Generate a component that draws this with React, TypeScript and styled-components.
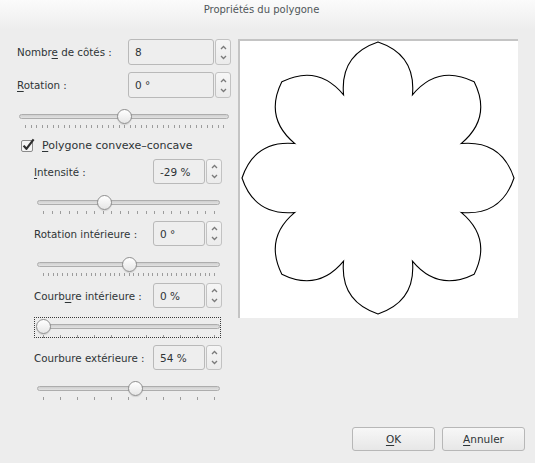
import React from "react";
import styled, { createGlobalStyle } from "styled-components";

const GlobalStyle = createGlobalStyle`
  html, body { margin: 0; padding: 0; background: #ededed; }
  body { font-family: "DejaVu Sans", "Liberation Sans", sans-serif; }
  * { box-sizing: border-box; }
`;

const Window = styled.div`
  width: 535px;
  height: 463px;
  background: #ededed;
  display: flex;
  flex-direction: column;
  color: #2e3436;
  overflow: hidden;
`;

const TitleBar = styled.div`
  height: 30px;
  flex: none;
  background: linear-gradient(#fbfbfb, #ededed);
  display: flex;
  justify-content: center;
  padding: 4px 12px 0 0;
  font-size: 10px;
  line-height: 12px;
  color: #505659;
`;

const Body = styled.div`
  display: flex;
  align-items: flex-start;
  gap: 7px;
  padding: 9px 17px 0 17px;
  flex: none;
`;

const LeftCol = styled.div`
  width: 214px;
  display: flex;
  flex-direction: column;
`;

const Row = styled.div<{ $h: number; $mt?: number }>`
  height: ${(p) => p.$h}px;
  margin-top: ${(p) => p.$mt ?? 0}px;
  display: flex;
  align-items: center;
  justify-content: space-between;
`;

const Label = styled.span`
  font-size: 10.3px;
  color: #2e3436;
  white-space: nowrap;
  u { text-decoration: underline; text-underline-offset: 2px; }
`;

const Spin = styled.div<{ $w: number }>`
  display: flex;
  height: 100%;
  gap: 1px;
  width: ${(p) => p.$w}px;
`;

const SpinField = styled.div`
  flex: 1;
  border: 1px solid #b9b9b9;
  border-radius: 3px;
  background: #eeeeee;
  display: flex;
  align-items: center;
  padding-left: 6px;
  font-size: 10.5px;
  color: #2e3436;
`;

const SpinButtons = styled.div`
  width: 16px;
  border: 1px solid #c2c2c2;
  border-radius: 3px;
  background: linear-gradient(#f6f6f6, #ebebeb);
  display: flex;
  flex-direction: column;
  align-items: center;
  justify-content: space-around;
  padding: 2px 0;
`;

const SliderWrap = styled.div<{ $mt: number; $pl: number; $pr: number; $focused?: boolean }>`
  margin-top: ${(p) => p.$mt}px;
  padding: 0 ${(p) => p.$pr}px 0 ${(p) => p.$pl}px;
  position: relative;
  ${(p) =>
    p.$focused
      ? `&::after { content: ""; position: absolute; left: 0; right: 1px; top: -1px; height: 19px; border: 1px dotted #3a3a3a; pointer-events: none; }`
      : ""}
`;

const SliderBox = styled.div`
  position: relative;
  height: 24px;
  display: flex;
  flex-direction: column;
`;

const Track = styled.div`
  margin-top: 6px;
  height: 5px;
  border: 1px solid #adadad;
  border-radius: 3px;
  background: linear-gradient(#cfcfcf, #e2e2e2);
`;

const Ticks = styled.div`
  margin-top: 6px;
  height: 3px;
  padding: 0 5px 0 6px;
  display: flex;
  justify-content: space-between;
`;

const Tick = styled.span`
  width: 1px;
  height: 3px;
  background: #9c9c9c;
`;

const Handle = styled.div`
  position: absolute;
  top: 1px;
  width: 15px;
  height: 15px;
  border-radius: 50%;
  border: 1px solid #8e8e8e;
  background: linear-gradient(#ffffff, #e6e6e6);
  box-shadow: 0 1px 1px rgba(0, 0, 0, 0.12);
`;

const CheckRow = styled.div`
  margin-top: 5px;
  height: 16px;
  display: flex;
  align-items: center;
  gap: 6px;
  padding-left: 4px;
  font-size: 11px;
  color: #2e3436;
  u { text-decoration: underline; text-underline-offset: 2px; }
`;

const Indented = styled.div`
  margin-top: 6px;
  padding-left: 17px;
  margin-right: 9px;
  display: flex;
  flex-direction: column;
  gap: 3px;
`;

const Field = styled.div`
  display: flex;
  flex-direction: column;
`;

const Preview = styled.div`
  width: 280px;
  height: 279px;
  flex: none;
  background: #ffffff;
  border-top: 2px solid #c4c4c4;
  border-left: 2px solid #c4c4c4;
  display: flex;
`;

const Footer = styled.div`
  margin-top: auto;
  display: flex;
  justify-content: flex-end;
  gap: 7px;
  padding: 0 10px 12px 0;
`;

const Button = styled.button`
  width: 83px;
  height: 24px;
  border: 1px solid #b7b7b7;
  border-radius: 3px;
  background: linear-gradient(#f7f7f7, #e7e7e7);
  font-family: "DejaVu Sans", "Liberation Sans", sans-serif;
  font-size: 10.5px;
  color: #2e3436;
  padding: 0;
  u { text-decoration: underline; text-underline-offset: 2px; }
`;

const Chevron = ({ up }: { up?: boolean }) => (
  <svg width="7" height="5" viewBox="0 0 7 5">
    <path
      d={up ? "M1 4 L3.5 1.5 L6 4" : "M1 1 L3.5 3.5 L6 1"}
      fill="none"
      stroke="#7a7a7a"
      strokeWidth="1.3"
    />
  </svg>
);

const SpinBox = ({ value, w }: { value: string; w: number }) => (
  <Spin $w={w}>
    <SpinField>{value}</SpinField>
    <SpinButtons>
      <Chevron up />
      <Chevron />
    </SpinButtons>
  </Spin>
);

const Slider = ({
  frac,
  ticks,
  mt,
  pl,
  pr,
  focused,
}: {
  frac: number;
  ticks: number;
  mt: number;
  pl: number;
  pr: number;
  focused?: boolean;
}) => (
  <SliderWrap $mt={mt} $pl={pl} $pr={pr} $focused={focused}>
    <SliderBox>
      <Track />
      <Ticks>
        {Array.from({ length: ticks }).map((_, i) => (
          <Tick key={i} />
        ))}
      </Ticks>
      <Handle style={{ left: `calc(6px + (100% - 11px) * ${frac} - 7.5px)` }} />
    </SliderBox>
  </SliderWrap>
);

const CheckIcon = () => (
  <svg width="15" height="14" viewBox="0 0 15 14">
    <rect x="0.5" y="2.5" width="11" height="11" rx="1.5" fill="#f4f4f4" stroke="#8a8a8a" />
    <path d="M2.6 7.6 L5.4 10.8 L12.6 1.4" fill="none" stroke="#2e2e2e" strokeWidth="2.2" strokeLinejoin="round" />
  </svg>
);

function flowerPath(): string {
  const cx = 138;
  const cy = 137;
  const R = 136;
  const r = 90;
  const bulge = 25;
  const pt = (a: number, rad: number) => {
    const t = (a * Math.PI) / 180;
    return [cx + rad * Math.sin(t), cy - rad * Math.cos(t)];
  };
  const ctrl = (p: number[], q: number[]) => {
    const mx = (p[0] + q[0]) / 2;
    const my = (p[1] + q[1]) / 2;
    const dx = q[0] - p[0];
    const dy = q[1] - p[1];
    const len = Math.hypot(dx, dy);
    let nx = -dy / len;
    let ny = dx / len;
    if (nx * (mx - cx) + ny * (my - cy) < 0) {
      nx = -nx;
      ny = -ny;
    }
    return [mx + nx * bulge, my + ny * bulge];
  };
  const f = (n: number) => n.toFixed(2);
  let prev = pt(-22.5, r);
  let d = `M${f(prev[0])} ${f(prev[1])}`;
  for (let k = 0; k < 8; k++) {
    const o = pt(k * 45, R);
    const i = pt(k * 45 + 22.5, r);
    const c1 = ctrl(prev, o);
    const c2 = ctrl(o, i);
    d += ` Q${f(c1[0])} ${f(c1[1])} ${f(o[0])} ${f(o[1])}`;
    d += ` Q${f(c2[0])} ${f(c2[1])} ${f(i[0])} ${f(i[1])}`;
    prev = i;
  }
  return d + " Z";
}

const Flower = () => (
  <svg width="278" height="277" viewBox="0 0 278 277">
    <path d={flowerPath()} fill="none" stroke="#000" strokeWidth="1.1" />
  </svg>
);

export default function App() {
  return (
    <>
      <GlobalStyle />
      <Window>
        <TitleBar>Propriétés du polygone</TitleBar>
        <Body>
          <LeftCol>
            <Row $h={26}>
              <Label>
                Nombr<u>e</u> de côtés :
              </Label>
              <SpinBox value="8" w={103} />
            </Row>
            <Row $h={26} $mt={7}>
              <Label>
                <u>R</u>otation :
              </Label>
              <SpinBox value="0 °" w={103} />
            </Row>
            <Slider frac={0.5} ticks={37} mt={10} pl={2} pr={2} />
            <CheckRow>
              <CheckIcon />
              <span>
                <u>P</u>olygone convexe–concave
              </span>
            </CheckRow>
            <Indented>
              <Field>
                <Row $h={25}>
                  <Label>
                    <u>I</u>ntensité :
                  </Label>
                  <SpinBox value="-29 %" w={69} />
                </Row>
                <Slider frac={0.355} ticks={21} mt={10} pl={3} pr={2} />
              </Field>
              <Field>
                <Row $h={25}>
                  <Label>Rotation intérieure :</Label>
                  <SpinBox value="0 °" w={69} />
                </Row>
                <Slider frac={0.5} ticks={37} mt={10} pl={3} pr={2} />
              </Field>
              <Field>
                <Row $h={25}>
                  <Label>
                    Courb<u>u</u>re intérieure :
                  </Label>
                  <SpinBox value="0 %" w={69} />
                </Row>
                <Slider frac={0} ticks={11} mt={10} pl={3} pr={2} focused />
              </Field>
              <Field>
                <Row $h={25}>
                  <Label>Courbure extérieure :</Label>
                  <SpinBox value="54 %" w={69} />
                </Row>
                <Slider frac={0.54} ticks={11} mt={10} pl={3} pr={2} />
              </Field>
            </Indented>
          </LeftCol>
          <Preview>
            <Flower />
          </Preview>
        </Body>
        <Footer>
          <Button>
            <u>O</u>K
          </Button>
          <Button>
            <u>A</u>nnuler
          </Button>
        </Footer>
      </Window>
    </>
  );
}
